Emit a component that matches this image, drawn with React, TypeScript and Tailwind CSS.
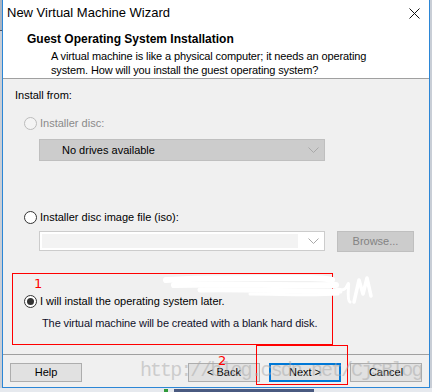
import React from "react";

const FONT = { fontFamily: '"Liberation Sans", Arial, sans-serif' };

function Radio({ checked, disabled }: { checked?: boolean; disabled?: boolean }) {
  return (
    <span
      className={
        "flex h-[13px] w-[13px] shrink-0 items-center justify-center rounded-full border " +
        (disabled ? "border-[#bcbcbc] bg-[#f4f4f4]" : "border-[#333333] bg-white")
      }
    >
      {checked && <span className="h-[7px] w-[7px] rounded-full bg-[#333333]" />}
    </span>
  );
}

function Chevron({ color }: { color: string }) {
  return (
    <svg width="11" height="6" viewBox="0 0 11 6" className="shrink-0">
      <polyline points="0.5,0.5 5.5,5.5 10.5,0.5" fill="none" stroke={color} strokeWidth="1" />
    </svg>
  );
}

function Button({ label, focused }: { label: string; focused?: boolean }) {
  return (
    <div
      className={
        "flex h-[19px] w-[72px] items-center justify-center bg-[#e1e1e1] text-[11px] text-black " +
        (focused ? "border-2 border-[#0078d7]" : "border border-[#adadad]")
      }
    >
      {label}
    </div>
  );
}

export default function App() {
  return (
    <div className="relative h-[392px] w-[432px] overflow-hidden bg-[#e6e9ee]" style={FONT}>
      <div className="flex h-[388px]">
        <div className="flex w-[2px] flex-col bg-[#c9ced6]">
          <div className="h-[30px] bg-[#aab4c2]" />
          <div className="h-px bg-[#4a5060]" />
        </div>
        {/* window */}
        <div className="flex w-[428px] flex-col border-x border-b border-[#2b86d6] bg-[#f0f0f0]">
          {/* title bar + header */}
          <div className="bg-white">
            <div className="flex h-[28px] items-start justify-between pl-[4px] pr-[9px] pt-[5px]">
              <span className="text-[13px] leading-[16px] text-black">New Virtual Machine Wizard</span>
              <svg width="11" height="11" viewBox="0 0 11 11" className="mt-[3px]">
                <path d="M0.5 0.5 L10.5 10.5 M10.5 0.5 L0.5 10.5" stroke="#111" strokeWidth="1" />
              </svg>
            </div>
            <div className="h-[50px] pl-[24px] pt-[4px]">
              <div className="text-[12px] font-bold leading-[15px] text-black">
                Guest Operating System Installation
              </div>
              <div className="mt-[2px] pl-[24px] text-[11px] leading-[14px] tracking-[-0.13px] text-black">
                A virtual machine is like a physical computer; it needs an operating
                <br />
                system. How will you install the guest operating system?
              </div>
            </div>
          </div>
          <div className="h-px bg-[#a0a0a0]" />

          {/* body */}
          <div className="h-[275px] px-[9px] pt-[8px] text-[11px]">
            <div className="pl-[3px] leading-[16px] text-black">Install from:</div>

            <div className="mt-[12px] flex items-center gap-[3px] pl-[12px] text-[#8a8a8a]">
              <Radio disabled />
              <span className="leading-[16px]">Installer disc:</span>
            </div>
            <div className="ml-[27px] mt-[8px] flex h-[22px] w-[286px] items-center justify-between border border-[#bfbfbf] bg-[#cccccc] pl-[22px] pr-[5px]">
              <span className="text-black">No drives available</span>
              <Chevron color="#a8a8a8" />
            </div>

            <div className="mt-[48px] flex items-center gap-[3px] pl-[12px] text-black">
              <Radio />
              <span className="leading-[16px]">Installer disc image file (iso):</span>
            </div>
            <div className="ml-[27px] mt-[6px] flex items-start gap-[12px]">
              <div className="flex h-[20px] w-[286px] items-center border border-[#cccccc] bg-white p-[2px] pr-[5px]">
                <div className="h-full flex-1 bg-[#f3f3f3]" />
                <span className="pl-[10px]">
                  <Chevron color="#a8a8a8" />
                </span>
              </div>
              <div className="flex h-[21px] w-[77px] items-center justify-center border border-[#bfbfbf] bg-[#cccccc] text-[#838383]">
                Browse...
              </div>
            </div>

            <div className="mt-[41px] flex items-center gap-[3px] pl-[12px] text-black">
              <Radio checked />
              <span className="leading-[16px]">I will install the operating system later.</span>
            </div>
            <div className="mt-[6px] pl-[30px] leading-[16px] tracking-[-0.1px] text-[#10102a]">
              The virtual machine will be created with a blank hard disk.
            </div>
          </div>

          <div className="h-px bg-[#a0a0a0]" />
          {/* footer */}
          <div className="flex flex-1 items-start px-[7px] pt-[8px]">
            <Button label="Help" />
            <div className="ml-auto flex gap-[9px]">
              <Button label="< Back" />
              <Button label="Next >" focused />
              <Button label="Cancel" />
            </div>
          </div>
        </div>
        <div className="w-[2px] bg-[#c9ced6]" />
      </div>

      {/* desktop strip below the window */}
      <div className="flex h-[4px] items-center gap-[6px] pl-[164px]">
        <div className="h-[3px] w-[4px] bg-[#2f9a3a]" />
        <div className="h-[3px] w-[140px] bg-[#4a5a80]" />
      </div>

      {/* annotation overlays */}
      <div className="absolute left-[12px] top-[273px] h-[72px] w-[321px] border border-[#ff0000]" />
      <div
        className="absolute left-[34px] top-[277px] text-[13px] leading-[14px] text-[#ff0000]"
        style={{ fontFamily: '"DejaVu Sans", sans-serif' }}
      >
        1
      </div>
      <div className="absolute left-[256px] top-[345px] h-[40px] w-[92px] border border-[#ff0000]" />
      <div
        className="absolute left-[218px] top-[354px] text-[13px] leading-[14px] text-[#ff0000]"
        style={{ fontFamily: '"DejaVu Sans", sans-serif' }}
      >
        2
      </div>

      {/* scribble */}
      <svg className="absolute left-[160px] top-[272px]" width="215" height="36" viewBox="0 0 215 36">
        <g fill="none" stroke="#ffffff" strokeLinecap="round" strokeLinejoin="round">
          <path d="M6 8 C50 5 110 6 150 6 C160 6 168 7 172 8" strokeWidth="6" />
          <path d="M14 13 C60 11 120 14 176 13" strokeWidth="6" />
          <path d="M40 18 C90 17 140 20 180 19" strokeWidth="5" />
          <path d="M90 22 C120 22 150 24 178 22" strokeWidth="3" />
          <path d="M174 20 C178 12 183 24 188 12 C190 8 186 28 190 30" strokeWidth="3" />
          <path d="M194 30 L199 8 L203 22 L207 6 L211 24" strokeWidth="3.5" />
        </g>
      </svg>

      {/* watermark */}
      <div
        className="pointer-events-none absolute left-[140px] top-[360px] text-[20px] leading-[22px] text-[#a8a8a8]/50"
        style={{ fontFamily: '"Liberation Mono", monospace', letterSpacing: "-1.95px" }}
      >
        http://blog.csdn.net/CjSBlog
      </div>
    </div>
  );
}
